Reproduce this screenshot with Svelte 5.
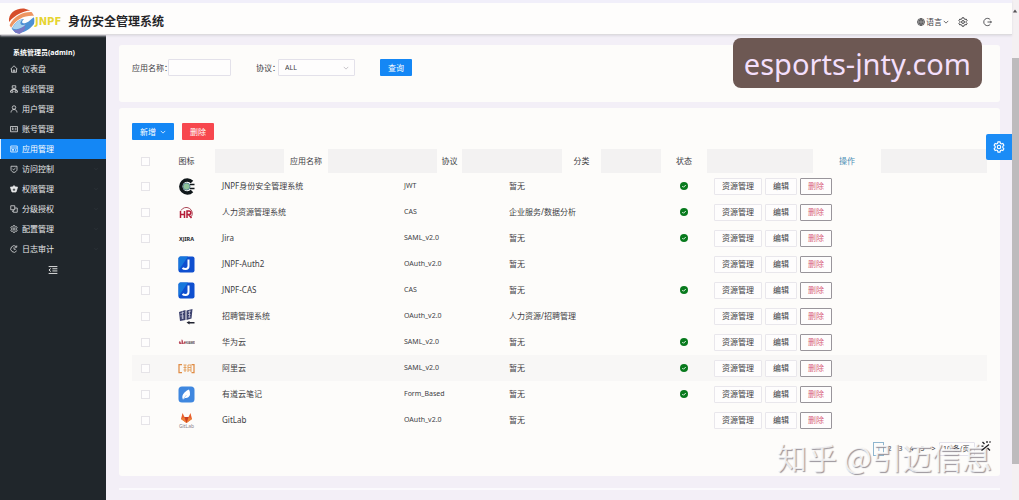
<script>
	const menu = [
		{ label: '仪表盘', icon: 'home' },
		{ label: '组织管理', icon: 'org' },
		{ label: '用户管理', icon: 'user' },
		{ label: '账号管理', icon: 'card' },
		{ label: '应用管理', icon: 'app' },
		{ label: '访问控制', icon: 'shield', sub: true },
		{ label: '权限管理', icon: 'badge', sub: true },
		{ label: '分级授权', icon: 'copy', sub: true },
		{ label: '配置管理', icon: 'gear', sub: true },
		{ label: '日志审计', icon: 'history', sub: true }
	];

	const apps = [
		{ logo: 'target', name: 'JNPF身份安全管理系统', protocol: 'JWT', category: '暂无', enabled: true },
		{ logo: 'hr', name: '人力资源管理系统', protocol: 'CAS', category: '企业服务/数据分析', enabled: true },
		{ logo: 'jira', name: 'Jira', protocol: 'SAML_v2.0', category: '暂无', enabled: true },
		{ logo: 'j', name: 'JNPF-Auth2', protocol: 'OAuth_v2.0', category: '暂无', enabled: false },
		{ logo: 'j', name: 'JNPF-CAS', protocol: 'CAS', category: '暂无', enabled: true },
		{ logo: 'recruit', name: '招聘管理系统', protocol: 'OAuth_v2.0', category: '人力资源/招聘管理', enabled: false },
		{ logo: 'huawei', name: '华为云', protocol: 'SAML_v2.0', category: '暂无', enabled: true },
		{ logo: 'aliyun', name: '阿里云', protocol: 'SAML_v2.0', category: '暂无', enabled: true },
		{ logo: 'note', name: '有道云笔记', protocol: 'Form_Based', category: '暂无', enabled: true },
		{ logo: 'gitlab', name: 'GitLab', protocol: 'OAuth_v2.0', category: '暂无', enabled: false }
	];

	let active = $state('应用管理');
	let keyword = $state('');
	let protocol = $state('ALL');
	let page = $state(1);
</script>

{#snippet gear()}
	<path d="M6.6 1.2h2.8l.5 1.9 1.3.8 1.9-.6 1.4 2.4-1.4 1.4v1.8l1.4 1.4-1.4 2.4-1.9-.6-1.3.8-.5 1.9H6.6l-.5-1.9-1.3-.8-1.9.6-1.4-2.4 1.4-1.4V7.1L1.5 5.7l1.4-2.4 1.9.6 1.3-.8z" />
	<circle cx="8" cy="8" r="2.3" />
{/snippet}

{#snippet chevron()}
	<svg class="chevron" viewBox="0 0 8 8"><path d="M1 2.5 4 5.500 7 2.500" /></svg>
{/snippet}

{#snippet menuIcon(name)}
	<svg class="line-icon" viewBox="0 0 16 16">
		{#if name === 'home'}
			<path d="M1 8.500 8 1.500l7 7M3 7.500V14.500h10V7.500M6.500 14.500V10h3v4.500" />
		{:else if name === 'org'}
			<path d="M4.500 1.500h7v5h-7zM8 6.500v3M3.500 12V9h9v3M1 11.500h5v3H1zM10 11.500h5v3h-5z" />
		{:else if name === 'user'}
			<circle cx="8" cy="5" r="3.500" />
			<path d="M2 15c.3-4 2.500-6 6-6s5.700 2 6 6" />
		{:else if name === 'card'}
			<path d="M1 3h14v10.500H1zM3.500 10.500c.5-2 3.500-2 4 0M9.500 6.500h3.500M9.500 9.500h3.500" />
			<circle cx="5.500" cy="6.500" r="1" />
		{:else if name === 'app'}
			<path d="M1.500 2h13v12h-13zM1.500 6h13M4 9h4M4 11.500h4M11 8.500v3" />
		{:else if name === 'shield'}
			<path d="M2 2.500h12V9c0 3-2.500 4.700-6 6-3.500-1.300-6-3-6-6zM5 7.500l2.200 2.200L11 6" />
		{:else if name === 'badge'}
			<path class="solid" d="M8 1l3 3h4l-1 4-2 6H4L2 8 1 4h4z" />
			<path class="cut" d="M8 7v5M5.500 9.500h5" />
		{:else if name === 'copy'}
			<path d="M1.500 1.500h8v8h-8zM9.500 6h5v8.500h-8v-5M4 12.500h2" />
		{:else if name === 'gear'}
			{@render gear()}
		{:else}
			<path d="M13.500 11.500A6.500 6.500 0 1 1 12.500 3.300M13.500 1v3.500H10M8 4.500V8.500h3.500" />
		{/if}
	</svg>
{/snippet}

{#snippet appLogo(name)}
	<svg class="app-logo" viewBox="0 0 34 34">
		{#if name === 'target'}
			<path d="M28 8a13 13 0 1 0 0 18" fill="none" stroke="#10171a" stroke-width="7" />
			<circle cx="17" cy="17" r="7" fill="#8fc39a" stroke="#5d8795" stroke-width="2" />
			<path d="M24 13h9M24 21h9" stroke="#10171a" stroke-width="3" />
		{:else if name === 'hr'}
			<path d="M6 13a12 12 0 1 1 21 12" fill="none" stroke="#ad4a59" stroke-width="2" />
			<path d="M5 14v14M5 21h8M13 14v14M18 28V14h4c5 0 5 7 0 7h-4M21 21l6 7" fill="none" stroke="#b51d38" stroke-width="3" />
		{:else if name === 'jira'}
			<text x="17" y="21" font-size="11" font-weight="700" text-anchor="middle" fill="#22252b">XJIRA</text>
		{:else if name === 'j'}
			<rect x="1" y="1" width="32" height="32" rx="4" fill="#0f4fcf" />
			<path d="M1 29V5q0-4 4-4h15z" fill="#1677dc" />
			<path d="M21 7v13q0 6-6 6-4 0-6-2" fill="none" stroke="#fff" stroke-width="4" />
		{:else if name === 'recruit'}
			<path d="M2 8l13-4v20L4 26zM17 5l12-3-2 19-10 3z" fill="#3c416d" />
			<path d="M5 11l7-2M5 16h7M7 20h5M20 8l6-2M20 13h5M20 18h5M9 7v15M23 5v14" fill="none" stroke="#c9cade" stroke-width="1.5" />
			<path d="M17 29l6-3v2h10v3H23v2z" fill="#20222f" />
		{:else if name === 'huawei'}
			<path d="M3 20q-3-4 1-6l3 6 0-9q4 0 3 9l3-6q3 3 0 6z" fill="#b94b5c" />
			<text x="14" y="20" font-size="5" font-weight="700" fill="#4b4147">HUAWEI</text>
		{:else if name === 'aliyun'}
			<path d="M8 9H2v16h6M27 9h5v16h-5" fill="none" stroke="#e08c45" stroke-width="2.5" />
			<path d="M11 10h6M11 15h6M11 20h6M14 10v14M20 10h6M20 15h6M20 20h6M20 10v14M26 10v14" fill="none" stroke="#e5a261" stroke-width="2" />
		{:else if name === 'note'}
			<rect x="1" y="1" width="32" height="32" rx="7" fill="#3f87df" />
			<path d="M10 27q-4-7 3-14 5-5 9-6 3 6 2 11-3 7-10 6z" fill="#fff" />
			<path d="M10 27l7-9" stroke="#79aeea" stroke-width="1" />
		{:else}
			<path d="M17 22 6 14 9 2l4 8h8l4-8 3 12z" fill="#e8602c" />
			<path d="M17 22 6 14l7-4zM17 22l11-8-7-4z" fill="#ee8137" />
			<path d="M17 22 13 10h8z" fill="#c93d22" />
			<text x="17" y="32" font-size="10" text-anchor="middle" fill="#8b858c">GitLab</text>
		{/if}
	</svg>
{/snippet}

<div class="window">
	<div class="page">
		<header class="topbar">
			<svg class="brand-mark" viewBox="0 0 52 52">
				<path d="M2 27C0 10 15 0 31 1l12 4C29 6 14 13 2 27z" fill="#d64e2b" />
				<path d="M3 33C12 15 30 7 46 8l4 7C31 14 17 21 6 38z" fill="#ed9561" />
				<path d="M7 40c7-13 14-18 24-19-7 6-3 10 3 8 8-3 11-8 16-11 1 5 1 9 0 13-11 15-25 18-35 17z" fill="#4d91d4" />
				<path d="M10 43c14-1 20-6 22-12 3 8-1 15-10 19-5 0-9-3-12-7z" fill="#7a78c4" />
				<path d="M8 39c7-12 12-16 20-17-8 7-3 13 6 10-8 8-17 11-26 7z" fill="#a8d2ee" />
			</svg>
			<span class="brand">JNPF</span>
			<h1>身份安全管理系统</h1>
			<div class="tools">
				<button class="tool" type="button">
					<svg class="globe" viewBox="0 0 16 16">
						<circle cx="8" cy="8" r="7" />
						<path d="M1 8h14M2.500 4.500h11M2.500 11.500h11M8 1v14M8 1c-5 4-5 10 0 14M8 1c5 4 5 10 0 14" />
					</svg>
					语言
					{@render chevron()}
				</button>
				<button class="tool" type="button" aria-label="设置">
					<svg class="tool-icon" viewBox="0 0 16 16">{@render gear()}</svg>
				</button>
				<button class="tool" type="button" aria-label="退出">
					<svg class="tool-icon exit" viewBox="0 0 16 16"><path d="M13 4a6.500 6.500 0 1 0 0 8M8 8h7M13 6l2 2-2 2" /></svg>
				</button>
			</div>
		</header>

		<div class="body">
			<nav class="sidebar">
				<p class="account">系统管理员(admin)</p>
				{#each menu as item}
					<button class="menu-item" class:active={active === item.label} type="button" onclick={() => (active = item.label)}>
						{@render menuIcon(item.icon)}
						<span>{item.label}</span>
						{#if item.sub}{@render chevron()}{/if}
					</button>
				{/each}
				<button class="collapse" type="button" aria-label="收起菜单">
					<svg viewBox="0 0 16 16"><path d="M1 2.500h14M7 6h8M7 9.500h8M1 13.500h14M4.500 5.500 1.500 8l3 2.500" /></svg>
				</button>
			</nav>

			<main>
				<form class="card filters" onsubmit={(e) => e.preventDefault()}>
					<label for="app-name">应用名称：</label>
					<input id="app-name" class="text-box" type="text" bind:value={keyword} />
					<label class="second" for="protocol">协议：</label>
					<div class="select-wrap">
						<select id="protocol" bind:value={protocol}>
							<option>ALL</option>
							<option>CAS</option>
							<option>JWT</option>
							<option>SAML_v2.0</option>
							<option>OAuth_v2.0</option>
						</select>
						{@render chevron()}
					</div>
					<button class="btn primary search" type="submit">查询</button>
				</form>

				<section class="card list">
					<div class="actions">
						<button class="btn primary" type="button">新增 {@render chevron()}</button>
						<button class="btn danger" type="button">删除</button>
					</div>
					<table>
						<colgroup>
							<col class="c-check" />
							<col class="c-icon" />
							<col class="c-name" />
							<col class="c-protocol" />
							<col class="c-category" />
							<col class="c-status" />
							<col />
						</colgroup>
						<thead>
							<tr>
								<th><input type="checkbox" aria-label="全选" /></th>
								<th>图标</th>
								<th class="shaded">应用名称</th>
								<th class="shaded">协议</th>
								<th class="shaded">分类</th>
								<th>状态</th>
								<th class="shaded op">操作</th>
							</tr>
						</thead>
						<tbody>
							{#each apps as app}
								<tr class:hovered={app.logo === 'aliyun'}>
									<td class="center"><input type="checkbox" aria-label={app.name} /></td>
									<td class="center">{@render appLogo(app.logo)}</td>
									<td>{app.name}</td>
									<td class="latin">{app.protocol}</td>
									<td>{app.category}</td>
									<td class="center">
										{#if app.enabled}
											<svg class="status" viewBox="0 0 16 16">
												<circle cx="8" cy="8" r="8" />
												<path d="M4.500 8l2.500 2.500 4.500-4.500" />
											</svg>
										{/if}
									</td>
									<td>
										<div class="ops">
											<button class="btn plain" type="button">资源管理</button>
											<button class="btn plain" type="button">编辑</button>
											<button class="btn remove" type="button">删除</button>
										</div>
									</td>
								</tr>
							{/each}
						</tbody>
					</table>
					<div class="pager">
						{#each [1, 2, 3, 4, 5] as n}
							<button class="page-no" class:current={page === n} type="button" onclick={() => (page = n)}>{n}</button>
						{/each}
						<button class="page-no" type="button">&gt;</button>
						<select class="page-size" aria-label="每页条数">
							<option>10 条/页</option>
						</select>
					</div>
				</section>
				<footer></footer>
			</main>
		</div>
	</div>
	<div class="scrollbar">
		<svg viewBox="0 0 8 8"><path d="M1 6 4 2l3 4z" /></svg>
		<div class="thumb"></div>
	</div>

	<button class="settings" type="button" aria-label="主题设置">
		<svg viewBox="0 0 16 16">{@render gear()}</svg>
	</button>
	<div class="site-tag">esports-jnty.com</div>
	<div class="watermark">知乎 @引迈信息</div>
	<svg class="wand" viewBox="0 0 24 24">
		<path d="M3 21 18 9M5 4l4 4M14 2v4M21 3l-2 2M3 12h4M15 16l5 5" />
	</svg>
</div>

<style>
	:global(body) {
		margin: 0;
		overflow: hidden;
		background: #f3eff7;
	}

	.window {
		position: relative;
		display: flex;
		min-height: 100vh;
		font-family: 'Noto Sans', 'Noto Sans CJK SC', sans-serif;
		font-size: 8px;
		line-height: 12px;
		color: #404044;
	}

	button,
	input,
	select {
		font: inherit;
		color: inherit;
		box-sizing: border-box;
		margin: 0;
	}

	button {
		padding: 0;
		border: none;
		background: none;
		cursor: pointer;
	}

	svg {
		display: block;
		flex: none;
		fill: none;
		stroke-width: 1.5;
	}

	.page {
		flex: 1;
		min-width: 0;
		display: flex;
		flex-direction: column;
	}

	.topbar {
		display: flex;
		align-items: center;
		height: 35px;
		box-sizing: border-box;
		padding: 6px 20px 0 8px;
		border-top: 3px solid #f1effa;
		border-bottom: 1px solid #dddbde;
		background: #fefdfc;
		box-shadow: 0 1px 2px #dedae2;
		z-index: 1;
	}

	.brand-mark {
		width: 27px;
		height: 27px;
	}

	.brand {
		width: 33px;
		font-family: 'DejaVu Sans', sans-serif;
		font-size: 10px;
		font-weight: 700;
		color: #e6d431;
	}

	h1 {
		margin: 0;
		font-size: 12px;
		line-height: 16px;
		font-weight: 700;
		color: #252528;
	}

	.tools {
		display: flex;
		align-items: center;
		gap: 9px;
		margin-left: auto;
	}

	.tool {
		display: flex;
		align-items: center;
		gap: 1px;
	}

	.tool svg {
		stroke: #3d3d40;
	}

	.globe {
		width: 8px;
		height: 8px;
	}

	.tool-icon {
		width: 10px;
		height: 10px;
	}

	.exit {
		width: 9px;
		margin-left: 6px;
	}

	.chevron {
		width: 6px;
		height: 6px;
		stroke: currentColor;
		stroke-width: 1;
	}

	.body {
		flex: 1;
		display: flex;
	}

	.sidebar {
		flex: none;
		width: 106px;
		padding-top: 12px;
		box-sizing: border-box;
		background: #20262b;
		color: #e6e7e8;
	}

	.account {
		margin: 0;
		padding-left: 13px;
		font-size: 7px;
		font-weight: 700;
		color: #fff;
	}

	.menu-item {
		display: flex;
		align-items: center;
		gap: 4px;
		width: 100%;
		height: 20px;
		padding: 0 8px 0 10px;
	}

	.menu-item.active {
		background: #1487f5;
		box-shadow: inset 1px 0 #e3f1ff;
		color: #fff;
	}

	.menu-item .chevron {
		width: 4px;
		margin-left: auto;
		color: #3c4349;
	}

	.line-icon {
		width: 8px;
		height: 8px;
		stroke: currentColor;
	}

	.solid {
		fill: currentColor;
	}

	.cut {
		stroke: #20262b;
	}

	.collapse {
		display: block;
		margin: 6px auto;
	}

	.collapse svg {
		width: 10px;
		height: 10px;
		stroke: #e6e7e8;
	}

	main {
		flex: 1;
		min-width: 0;
		display: flex;
		flex-direction: column;
		gap: 6px;
		padding: 10px 12px 10px 13px;
	}

	.card {
		padding: 14px 13px;
		border-radius: 3px;
		background: #fdfcfa;
	}

	.filters {
		display: flex;
		align-items: center;
		padding-bottom: 26px;
	}

	.filters label {
		width: 36px;
		white-space: nowrap;
	}

	.filters .second {
		width: 22px;
		margin-left: 25px;
	}

	.text-box,
	select {
		height: 17px;
		padding: 0 6px;
		border: 1px solid #e3e1ea;
		border-radius: 1px;
		background: #fefdfd;
	}

	select {
		appearance: none;
		width: 100%;
	}

	.text-box {
		width: 63px;
	}

	.select-wrap {
		position: relative;
		width: 77px;
		font-size: 7px;
	}

	.select-wrap .chevron {
		position: absolute;
		right: 6px;
		top: 6px;
		color: #b5b3ba;
	}

	.btn {
		display: flex;
		align-items: center;
		gap: 4px;
		height: 17px;
		padding: 0 8px;
		border-radius: 1px;
		white-space: nowrap;
	}

	.primary {
		background: #1487f5;
		color: #fff;
	}

	.danger {
		background: #f7474e;
		color: #fff;
	}

	.search {
		margin-left: 25px;
	}

	.list {
		flex: 1;
		padding-top: 15px;
		padding-bottom: 12px;
	}

	.actions {
		display: flex;
		gap: 8px;
		margin-bottom: 9px;
	}

	table {
		width: 100%;
		table-layout: fixed;
		border-collapse: collapse;
	}

	.c-check {
		width: 26px;
	}

	.c-icon {
		width: 57px;
	}

	.c-name {
		width: 182px;
	}

	.c-protocol {
		width: 105px;
	}

	.c-category {
		width: 159px;
	}

	.c-status {
		width: 46px;
	}

	th {
		height: 24px;
		padding: 0;
		font-weight: 400;
		text-align: center;
	}

	/* header shading leaves the caption clear */
	.shaded {
		background: linear-gradient(90deg, #f3f2f2 38%, #fdfcfa 38% 62%, #f3f2f2 62%);
	}

	.op {
		color: #4c8fb5;
	}

	td {
		height: 26px;
		padding: 0 7px;
		white-space: nowrap;
	}

	.center {
		padding: 0;
	}

	.center svg {
		margin: 0 auto;
	}

	.hovered {
		background: #f8f7f6;
	}

	.latin {
		font-size: 7px;
	}

	input[type='checkbox'] {
		display: block;
		appearance: none;
		width: 9px;
		height: 9px;
		margin: 0 auto;
		border: 1px solid #e6e4e8;
		background: #fefdfd;
	}

	.app-logo {
		width: 17px;
		height: 17px;
	}

	.status {
		width: 8px;
		height: 8px;
		fill: #087a1d;
		stroke-width: 2;
	}

	.status path {
		fill: none;
		stroke: #e4f3e6;
	}

	.ops {
		display: flex;
		gap: 3px;
	}

	.plain,
	.remove {
		padding: 0 7px;
		border: 1px solid #e9e7ec;
		background: #fefdfd;
	}

	.remove {
		border-color: #99959b;
		color: #d8627a;
	}

	.pager {
		display: flex;
		justify-content: flex-end;
		padding: 9px 12px 0 0;
		font-size: 7px;
	}

	.page-no {
		width: 11px;
		height: 14px;
	}

	.page-no.current {
		border: 1px solid #8fb6cf;
		color: #5a9bc4;
	}

	.page-size {
		width: 36px;
		height: 14px;
		padding: 0 3px;
	}

	footer {
		height: 2px;
		margin-top: 6px;
		background: #fbfafd;
	}

	.scrollbar {
		flex: none;
		display: flex;
		flex-direction: column;
		gap: 44px;
		width: 7px;
		box-sizing: border-box;
		padding: 8px 0 36px;
		background: #f4f0f2;
	}

	.scrollbar svg {
		width: 6px;
		height: 6px;
		fill: #555257;
	}

	.thumb {
		flex: 1;
		background: #bdbbbd;
	}

	.settings {
		position: absolute;
		top: 134px;
		right: 7px;
		padding: 7px;
		border-radius: 2px 0 0 2px;
		background: #1b8cf6;
	}

	.settings svg {
		width: 12px;
		height: 12px;
		stroke: #fff;
	}

	.site-tag {
		position: absolute;
		top: 38px;
		right: 37px;
		padding: 8px 11px 6px;
		border-radius: 8px;
		background: #6d5853;
		color: #f3dffb;
		font-size: 29px;
		line-height: 36px;
	}

	.watermark {
		position: absolute;
		right: 27px;
		bottom: 24px;
		color: rgba(255, 255, 255, 0.8);
		font-family: 'Noto Sans CJK SC', sans-serif;
		font-size: 30px;
		line-height: 40px;
		text-shadow: 1px 1px 1px #99949b;
		pointer-events: none;
	}

	.wand {
		position: absolute;
		right: 27px;
		bottom: 48px;
		width: 12px;
		height: 12px;
		stroke: #1c1c1e;
		stroke-width: 2.5;
	}
</style>
